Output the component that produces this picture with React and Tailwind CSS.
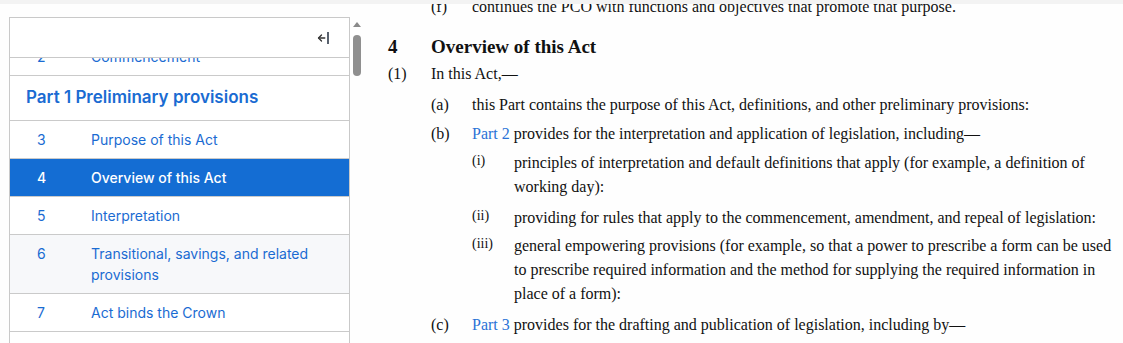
// Legislation viewer — table of contents sidebar beside the section text.

const tocRows = [
  { num: "3", title: "Purpose of this Act" },
  { num: "4", title: "Overview of this Act", active: true },
  { num: "5", title: "Interpretation" },
  { num: "6", title: "Transitional, savings, and related provisions", shaded: true },
  { num: "7", title: "Act binds the Crown" },
  { num: "8", title: "Commencement" },
];

function CollapseIcon() {
  return (
    <svg width="14" height="16" viewBox="0 0 14 16" fill="none">
      <path d="M4.5 5 1.5 8l3 3" stroke="#333" strokeWidth="1.3" strokeLinecap="round" strokeLinejoin="round" />
      <path d="M1.8 8h6" stroke="#333" strokeWidth="1.3" strokeLinecap="round" />
      <path d="M11 2v12" stroke="#2f3a4a" strokeWidth="1.6" />
    </svg>
  );
}

function TocRow({ num, title, active, shaded }) {
  const bg = active ? "bg-[#146dd3] text-white font-medium" : shaded ? "bg-[#f7f8fa] text-[#1a6bd2]" : "text-[#1a6bd2]";
  return (
    <div className={`flex border-b border-[#cacaca] py-2 pl-[27px] pr-4 text-[14px] leading-[21px] ${bg}`}>
      <span className="w-[54px] shrink-0">{num}</span>
      <span>{title}</span>
    </div>
  );
}

function Para({ label, small, indent, className = "", children }) {
  const pad = indent === 2 ? "pl-[126px]" : indent === 1 ? "pl-[84px]" : "pl-[43px]";
  const labelPos = indent === 2 ? "left-[84px]" : indent === 1 ? "left-[43px]" : "left-0";
  return (
    <div className={`relative ${pad} ${className}`}>
      <span className={`absolute top-0 ${labelPos} ${small ? "text-[14px] leading-[20px]" : ""}`}>{label}</span>
      {children}
    </div>
  );
}

export default function App() {
  return (
    <div className="h-[343px] overflow-hidden bg-[#fefefe]" style={{ fontFamily: "Inter, 'Noto Sans', sans-serif" }}>
      <div className="h-[4px] bg-[#f3f3f3] relative z-10" />
      <div className="flex">
        {/* Sidebar */}
        <div className="ml-[9px] mt-[13px] w-[341px] shrink-0 border border-b-0 border-[#c9c9c9] bg-white">
          <div className="flex h-[40px] items-center justify-end border-b border-[#c9c9c9] pr-[18px]">
            <CollapseIcon />
          </div>
          <div className="h-[300px] overflow-hidden">
            <div className="-mt-[20px]">
              <TocRow num="2" title="Commencement" />
              <div className="flex h-[45px] items-center border-b border-[#cacaca] pl-[16px] text-[17px] font-semibold text-[#1a6bd2]">
                Part 1 Preliminary provisions
              </div>
              {tocRows.map((r) => (
                <TocRow key={r.num} {...r} />
              ))}
            </div>
          </div>
        </div>

        {/* Sidebar scrollbar */}
        <div className="mt-[13px] flex w-[14px] shrink-0 flex-col items-center">
          <div className="mt-[5px] h-0 w-0 border-x-[4px] border-b-[5px] border-x-transparent border-b-[#8a8a8a]" />
          <div className="mt-[8px] h-[41px] w-[8px] rounded-full bg-[#8f8f8f]" />
        </div>

        {/* Section text */}
        <div
          className="min-w-0 flex-1 overflow-hidden pl-[24px] pr-[2px] text-[16px] leading-[24px] text-[#111]"
          style={{ fontFamily: "'Liberation Serif', 'Times New Roman', serif" }}
        >
          <div className="-mt-[9px]">
            <Para label="(f)" indent={1}>continues the PCO with functions and objectives that promote that purpose.</Para>

            <div className="mt-[16px] flex text-[19px] font-bold">
              <span className="w-[43px] shrink-0">4</span>
              <span>Overview of this Act</span>
            </div>

            <Para label="(1)" className="mt-[3px]">In this Act,—</Para>
            <Para label="(a)" indent={1} className="mt-[7px]">
              this Part contains the purpose of this Act, definitions, and other preliminary provisions:
            </Para>
            <Para label="(b)" indent={1} className="mt-[5px]">
              <span className="text-[#2a72d6]">Part 2</span> provides for the interpretation and application of legislation, including—
            </Para>
            <Para label="(i)" small indent={2} className="mt-[5px]">
              principles of interpretation and default definitions that apply (for example, a definition of working day):
            </Para>
            <Para label="(ii)" small indent={2} className="mt-[7px]">
              providing for rules that apply to the commencement, amendment, and repeal of legislation:
            </Para>
            <Para label="(iii)" small indent={2} className="mt-[4px]">
              general empowering provisions (for example, so that a power to prescribe a form can be used to prescribe required
              information and the method for supplying the required information in place of a form):
            </Para>
            <Para label="(c)" indent={1} className="mt-[7px]">
              <span className="text-[#2a72d6]">Part 3</span> provides for the drafting and publication of legislation, including by—
            </Para>
          </div>
        </div>
      </div>
    </div>
  );
}
